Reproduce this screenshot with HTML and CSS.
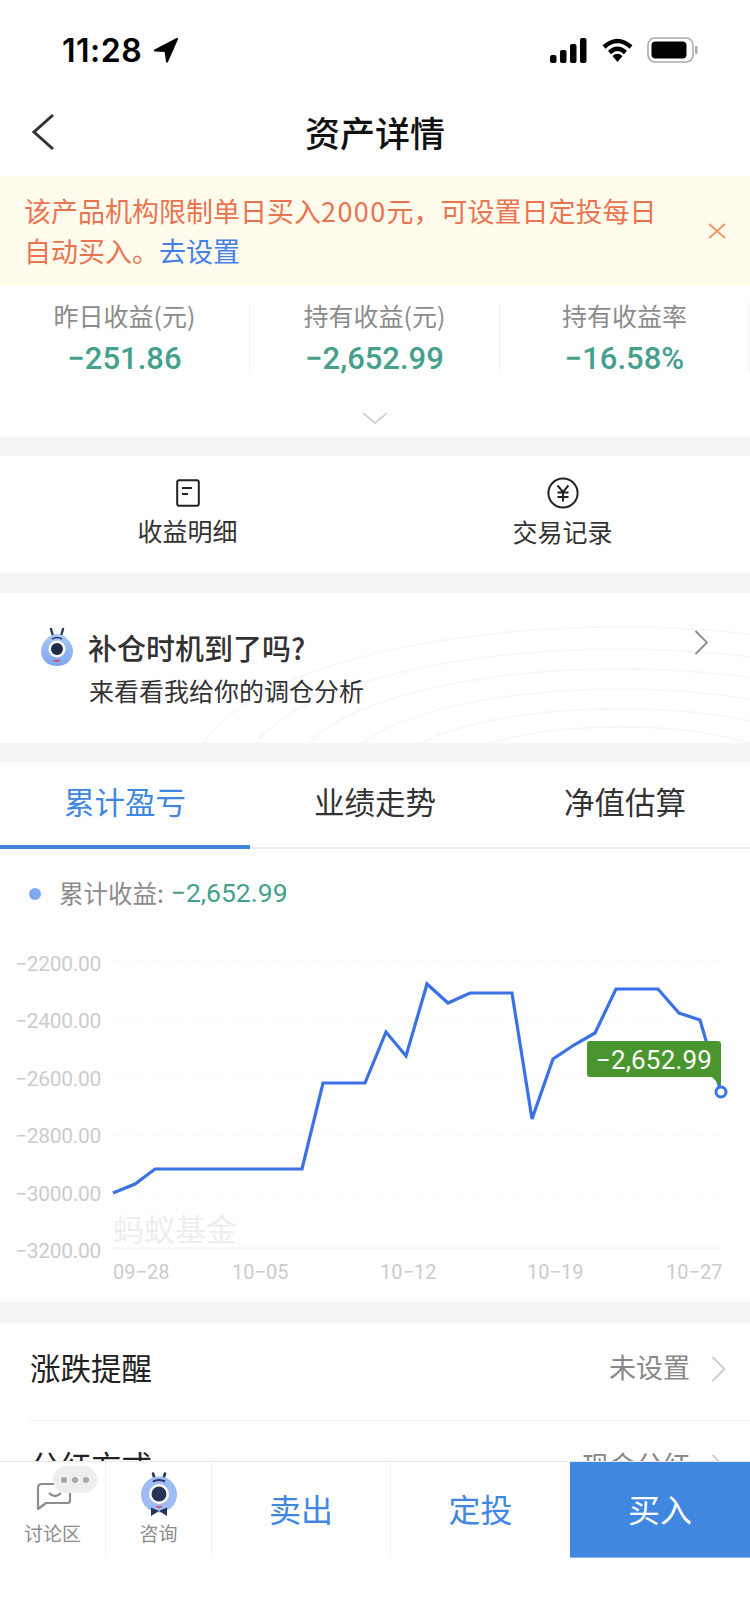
FILE: index.html
```html
<!DOCTYPE html>
<html lang="zh-CN">
<head>
    <meta charset="UTF-8">
    <meta name="viewport" content="width=device-width, initial-scale=1.0">
    <title>资产详情</title>
    <link rel="stylesheet" href="styles.css">
</head>
<body>
    <div class="page">
        <div class="status-bar">
            <div class="status-time">
                <span>11:28</span>
                <svg class="status-arrow" width="26" height="26" viewBox="0 0 26 26"><path d="M24 2 L2 13.5 L12.5 14 L14 24.5 Z" fill="#000" stroke="#000" stroke-width="2" stroke-linejoin="round"/></svg>
            </div>
            <div class="status-icons">
                <svg width="38" height="25" viewBox="0 0 38 25"><rect x="0" y="17" width="6.5" height="8" rx="2"/><rect x="10" y="12" width="6.5" height="13" rx="2"/><rect x="20" y="6" width="6.5" height="19" rx="2"/><rect x="30" y="0" width="6.5" height="25" rx="2"/></svg>
                <svg width="33" height="25" viewBox="0 0 33 25"><path d="M3 9 Q16.5 -3 30 9" fill="none" stroke="#000" stroke-width="4.5"/><path d="M8.5 14.5 Q16.5 7 24.5 14.5" fill="none" stroke="#000" stroke-width="4.5"/><path d="M11.5 18 Q16.5 13.5 21.5 18 L16.5 24 Z"/></svg>
                <svg width="52" height="26" viewBox="0 0 52 26"><rect x="1" y="1" width="45" height="24" rx="7" fill="none" stroke="#aaa" stroke-width="1.6"/><rect x="4.5" y="4.5" width="35" height="17" rx="4"/><rect x="48" y="9" width="2.5" height="8" rx="1.2" fill="#aaa"/></svg>
            </div>
        </div>

        <div class="nav-bar">
            <svg class="nav-back" width="24" height="38" viewBox="0 0 24 38"><path d="M22 2 L3 19 L22 36" fill="none" stroke="#333" stroke-width="3"/></svg>
            <h1 class="nav-title">资产详情</h1>
        </div>

        <div class="notice">
            <div class="notice-text">
                <p>该产品机构限制单日买入<span class="notice-num">2000</span>元，可设置日定投每日</p>
                <p>自动买入。<a class="notice-link">去设置</a></p>
            </div>
            <svg class="notice-close" width="18" height="16" viewBox="0 0 18 16"><path d="M1 1 L17 15 M17 1 L1 15" fill="none" stroke="#ef9462" stroke-width="1.8"/></svg>
        </div>

        <div class="stats">
            <div class="stats-row">
                <div class="stat">
                    <div class="stat-label">昨日收益(元)</div>
                    <div class="stat-value">−251.86</div>
                </div>
                <div class="stat">
                    <div class="stat-label">持有收益(元)</div>
                    <div class="stat-value">−2,652.99</div>
                </div>
                <div class="stat">
                    <div class="stat-label">持有收益率</div>
                    <div class="stat-value">−16.58%</div>
                </div>
            </div>
            <svg class="stats-more" width="26" height="12" viewBox="0 0 26 12"><path d="M1 1 L13 11 L25 1" fill="none" stroke="#c8c8c8" stroke-width="1.6"/></svg>
        </div>

        <div class="actions section">
            <div class="action">
                <svg width="24" height="28" viewBox="0 0 24 28"><rect x="1.2" y="1.2" width="21.6" height="25.6" rx="2" fill="none" stroke="#222" stroke-width="2"/><path d="M6 9 H16 M6 15 H12" stroke="#222" stroke-width="2"/></svg>
                <span>收益明细</span>
            </div>
            <div class="action action-right">
                <svg width="32" height="32" viewBox="0 0 32 32"><circle cx="16" cy="16" r="14.6" fill="none" stroke="#222" stroke-width="2"/><path d="M10.5 8.5 L16 15 L21.5 8.5 M16 15 V24.5 M10.5 15.5 H21.5 M10.5 20 H21.5" fill="none" stroke="#222" stroke-width="2"/></svg>
                <span>交易记录</span>
            </div>
        </div>

        <div class="advisor section">
            <svg class="advisor-arcs" width="750" height="150" viewBox="0 0 750 150">
                <g fill="none" stroke="#f2f7fc" stroke-width="1.5">
                    <ellipse cx="620" cy="180" rx="425" ry="146"/>
                    <ellipse cx="620" cy="180" rx="375" ry="124"/>
                    <ellipse cx="620" cy="180" rx="325" ry="104"/>
                    <ellipse cx="620" cy="180" rx="275" ry="84"/>
                    <ellipse cx="620" cy="180" rx="225" ry="64"/>
                    <ellipse cx="620" cy="180" rx="170" ry="46"/>
                </g>
            </svg>
            <div class="advisor-head">
                <svg class="advisor-mascot" width="34" height="38" viewBox="0 0 34 38">
                    <defs>
                        <linearGradient id="mascotBody" x1="0" y1="0" x2="0" y2="1">
                            <stop offset="0" stop-color="#a9c8f6"/>
                            <stop offset="1" stop-color="#7ea6ee"/>
                        </linearGradient>
                    </defs>
                    <path d="M13 8 L11 1 M21 8 L23 1" stroke="#2c3a5e" stroke-width="2.4" stroke-linecap="round"/>
                    <path d="M17 6 C26 6 33 16 33 23 C33 32 26 38 17 38 C8 38 1 32 1 23 C1 16 8 6 17 6 Z" fill="url(#mascotBody)"/>
                    <path d="M12 11 Q17 8 22 11" fill="none" stroke="#2c3a5e" stroke-width="1.6"/>
                    <circle cx="17" cy="21" r="8.5" fill="#fff"/>
                    <circle cx="17" cy="21" r="6" fill="#1f2a48"/>
                    <path d="M13 32 Q17 36 21 32 Z" fill="#c9495a"/>
                </svg>
                <span class="advisor-title">补仓时机到了吗?</span>
            </div>
            <p class="advisor-sub">来看看我给你的调仓分析</p>
            <svg class="advisor-arrow" width="15" height="25" viewBox="0 0 15 25"><path d="M1.5 1 L13 12.5 L1.5 24" fill="none" stroke="#8a8a8a" stroke-width="1.8"/></svg>
        </div>

        <div class="tabs section">
            <div class="tab tab-active">累计盈亏</div>
            <div class="tab">业绩走势</div>
            <div class="tab">净值估算</div>
        </div>

        <div class="chart-panel">
            <div class="legend">
                <i class="legend-dot"></i>
                <span class="legend-label">累计收益:</span>
                <span class="legend-value">−2,652.99</span>
            </div>
            <svg class="chart" width="750" height="362" viewBox="0 940 750 362">
                <g class="chart-grid">
                    <line x1="112" y1="962" x2="721" y2="962"/>
                    <line x1="112" y1="1019" x2="721" y2="1019"/>
                    <line x1="112" y1="1077" x2="721" y2="1077"/>
                    <line x1="112" y1="1134" x2="721" y2="1134"/>
                    <line x1="112" y1="1192" x2="721" y2="1192"/>
                    <line class="chart-base" x1="112" y1="1248" x2="721" y2="1248"/>
                </g>
                <g class="chart-y">
                    <text x="101" y="971">−2200.00</text>
                    <text x="101" y="1028">−2400.00</text>
                    <text x="101" y="1086">−2600.00</text>
                    <text x="101" y="1143">−2800.00</text>
                    <text x="101" y="1201">−3000.00</text>
                    <text x="101" y="1258">−3200.00</text>
                </g>
                <g class="chart-x">
                    <text x="113" y="1279">09−28</text>
                    <text x="232" y="1279">10−05</text>
                    <text x="380" y="1279">10−12</text>
                    <text x="527" y="1279">10−19</text>
                    <text x="666" y="1279">10−27</text>
                </g>
                <text class="chart-mark" x="113" y="1241">蚂蚁基金</text>
                <polyline class="chart-line" points="113,1193 135,1184 155,1169 302,1169 323,1083 365,1083 386,1032 406,1056 427,984 448,1003 470,993 512,993 532,1119 553,1059 574,1045 595,1033 616,989 658,989 679,1013 700,1020 721,1092"/>
                <circle class="chart-end" cx="721" cy="1092" r="5"/>
                <path class="chart-tip" d="M590 1041 H718 Q721 1041 721 1044 V1086 L712 1077 H590 Q587 1077 587 1074 V1044 Q587 1041 590 1041 Z"/>
                <text class="chart-tip-text" x="654" y="1069">−2,652.99</text>
            </svg>
        </div>

        <div class="list section">
            <div class="list-row">
                <span class="list-name">涨跌提醒</span>
                <span class="list-value">未设置</span>
                <svg width="15" height="26" viewBox="0 0 15 26"><path d="M1.5 1 L13.5 13 L1.5 25" fill="none" stroke="#ccc" stroke-width="1.8"/></svg>
            </div>
            <div class="list-row">
                <span class="list-name">分红方式</span>
                <span class="list-value">现金分红</span>
                <svg width="15" height="26" viewBox="0 0 15 26"><path d="M1.5 1 L13.5 13 L1.5 25" fill="none" stroke="#ccc" stroke-width="1.8"/></svg>
            </div>
        </div>

        <div class="bottom-bar">
            <div class="bar-item bar-talk">
                <svg class="bar-talk-icon" width="60" height="44" viewBox="0 0 60 44">
                    <path d="M26 17 H6 Q2 17 2 21 V42 L10 36 H32 Q34 36 34 33 V26" fill="none" stroke="#8c8c8c" stroke-width="2.2" stroke-linejoin="round"/>
                    <path d="M13 26 Q19 32 25 26" fill="none" stroke="#8c8c8c" stroke-width="2.2"/>
                </svg>
                <div class="bar-bubble"><i></i><i></i><i></i></div>
                <span class="bar-caption">讨论区</span>
            </div>
            <div class="bar-item">
                <svg width="38" height="44" viewBox="0 0 38 44">
                    <path d="M15 8 L13 1.5 M23 8 L25 1.5" stroke="#27345a" stroke-width="2.6" stroke-linecap="round"/>
                    <circle cx="19" cy="22.5" r="18" fill="#9dbcf4"/>
                    <path d="M13 9.5 Q19 6.5 25 9.5" fill="none" stroke="#27345a" stroke-width="2"/>
                    <circle cx="19" cy="22" r="10" fill="#fff"/>
                    <circle cx="19" cy="22" r="7.5" fill="#27345a"/>
                    <path d="M15 34 Q19 38 23 34 Z" fill="#d4566a"/>
                    <path d="M19 39 L11 35.5 V44 Z M19 39 L27 35.5 V44 Z" fill="#27345a"/>
                </svg>
                <span class="bar-caption">咨询</span>
            </div>
            <div class="bar-btn bar-btn-line">卖出</div>
            <div class="bar-btn">定投</div>
            <div class="bar-btn bar-btn-buy">买入</div>
        </div>
    </div>
</body>
</html>
```

FILE: styles.css
```css
* {
    box-sizing: border-box;
}
body {
    margin: 0;
    padding: 0;
    background-color: #ffffff;
    font-family: "Noto Sans CJK SC", "Liberation Sans", sans-serif;
    color: #333333;
}
svg {
    display: block;
}
p, h1 {
    margin: 0;
}
.page {
    position: relative;
    width: 750px;
    height: 1623px;
    overflow: hidden;
    background-color: #ffffff;
}
.section {
    border-top: 20px solid #f5f5f5;
}

/* status bar */
.status-bar {
    height: 88px;
    padding: 37px 50px 0 62px;
    display: flex;
    justify-content: space-between;
    align-items: flex-start;
}
.status-time {
    display: flex;
    align-items: center;
    gap: 11px;
    height: 26px;
    font-family: Inter, sans-serif;
    font-size: 32px;
    font-weight: 600;
    letter-spacing: 0.5px;
    color: #000000;
}
.status-icons {
    display: flex;
    align-items: center;
    gap: 13px;
    margin-right: 1px;
}

/* nav */
.nav-bar {
    height: 88px;
    position: relative;
    display: flex;
    align-items: center;
    justify-content: center;
}
.nav-back {
    position: absolute;
    left: 31px;
    top: 25px;
}
.nav-title {
    font-size: 35px;
    font-weight: 500;
    color: #111111;
    line-height: 88px;
}

/* notice */
.notice {
    height: 110px;
    padding: 15px 24px 0 24px;
    display: flex;
    justify-content: space-between;
    background-color: #fffbed;
}
.notice-text {
    width: 640px;
    font-size: 27px;
    line-height: 40px;
    color: #ea7350;
}
.notice-num {
    letter-spacing: 1.4px;
}
.notice-link {
    color: #4480e8;
}
.notice-close {
    margin-top: 32px;
}

/* stats */
.stats {
    height: 151px;
    padding-top: 17px;
}
.stats-row {
    display: grid;
    grid-template-columns: repeat(3, 250px);
}
.stat {
    height: 70px;
    border-right: 1px solid #f0f0f0;
    text-align: center;
}
.stat-label {
    margin-top: -3px;
    font-size: 25px;
    line-height: 30px;
    color: #8c8c8c;
}
.stat-value {
    margin-top: 11px;
    font-family: Roboto, sans-serif;
    font-size: 31px;
    font-weight: 500;
    line-height: 36px;
    color: #45a08d;
}
.stats-more {
    margin: 39px auto 0;
}

/* actions */
.actions {
    height: 136px;
    border-top-width: 19px;
    display: flex;
}
.action {
    width: 50%;
    padding-top: 21px;
    display: flex;
    flex-direction: column;
    align-items: center;
    font-size: 25px;
    color: #333333;
}
.action svg {
    height: 32px;
}
.action span {
    margin-top: 3px;
    line-height: 36px;
}
.action-right span {
    margin-top: 4px;
}

/* advisor */
.advisor {
    height: 170px;
    position: relative;
    padding: 34px 40px 0;
}
.advisor-arcs {
    position: absolute;
    left: 0;
    top: 0;
}
.advisor-head {
    position: relative;
    display: flex;
    align-items: center;
    gap: 14px;
}
.advisor-title {
    font-size: 29px;
    font-weight: 500;
    line-height: 40px;
}
.advisor-sub {
    position: relative;
    margin: 3px 0 0 49px;
    font-size: 25px;
    line-height: 40px;
}
.advisor-arrow {
    position: absolute;
    right: 41px;
    top: 37px;
}

/* tabs */
.tabs {
    height: 106px;
    border-top-width: 19px;
    display: flex;
    border-bottom: 2px solid #eeeeee;
}
.tab {
    width: 250px;
    height: 87px;
    padding-top: 18px;
    text-align: center;
    font-size: 30.5px;
    line-height: 42px;
}
.tab-active {
    color: #3f87e0;
    border-bottom: 4px solid #3f87e0;
}

/* chart */
.chart-panel {
    height: 453px;
}
.legend {
    height: 91px;
    padding: 28px 0 0 29px;
    display: flex;
    align-items: flex-start;
    font-size: 24.5px;
    line-height: 32px;
}
.legend-dot {
    width: 12px;
    height: 12px;
    margin-top: 11px;
    border-radius: 50%;
    background-color: #7ea8f0;
}
.legend-label {
    margin-left: 18px;
    color: #8c8c8c;
}
.legend-value {
    margin-left: 7px;
    font-family: Roboto, sans-serif;
    font-size: 26.5px;
    color: #45a08d;
}
.chart-grid line {
    stroke: #f2f2f2;
    stroke-width: 1;
    stroke-dasharray: 2 3;
}
.chart-grid .chart-base {
    stroke-dasharray: none;
}
.chart-y text {
    font-family: Roboto, sans-serif;
    font-size: 21px;
    letter-spacing: -0.3px;
    fill: #cccccc;
    text-anchor: end;
}
.chart-x text {
    font-family: Roboto, sans-serif;
    font-size: 20px;
    fill: #cccccc;
}
.chart-mark {
    font-size: 31px;
    fill: #eeeeee;
}
.chart-line {
    fill: none;
    stroke: #3a72e6;
    stroke-width: 3.2;
    stroke-linejoin: miter;
}
.chart-end {
    fill: #ffffff;
    stroke: #3a72e6;
    stroke-width: 3;
}
.chart-tip {
    fill: #4a962e;
}
.chart-tip-text {
    font-family: Roboto, sans-serif;
    font-size: 26px;
    letter-spacing: 0.2px;
    fill: #ffffff;
    text-anchor: middle;
}

/* list */
.list {
    border-top-width: 21px;
    padding-left: 30px;
}
.list-row {
    height: 98px;
    padding: 0 24px 10px 0;
    display: flex;
    align-items: center;
    border-bottom: 1px solid #eeeeee;
}
.list-name {
    flex: 1;
    font-size: 30.5px;
    color: #222222;
}
.list-value {
    margin-right: 21px;
    font-size: 27px;
    color: #888888;
}
.list-row svg {
    margin-top: 4px;
}

/* bottom bar */
.bottom-bar {
    position: absolute;
    left: 0;
    right: 0;
    bottom: 0;
    height: 162px;
    display: flex;
    align-items: flex-start;
    background-color: #ffffff;
    border-top: 1px solid #e8e8e8;
}
.bar-item {
    position: relative;
    width: 106px;
    height: 95px;
    padding-top: 10px;
    display: flex;
    flex-direction: column;
    align-items: center;
    border-right: 1px solid #f0f0f0;
}
.bar-item .bar-caption {
    margin-top: 3px;
}
.bar-talk {
    padding-top: 54px;
}
.bar-talk-icon {
    position: absolute;
    left: 36px;
    top: 5px;
}
.bar-bubble {
    position: absolute;
    left: 53px;
    top: 4px;
    width: 44px;
    height: 27px;
    border-radius: 14px;
    background-color: #eeeeee;
    display: flex;
    align-items: center;
    justify-content: center;
    gap: 5px;
}
.bar-bubble i {
    width: 6px;
    height: 6px;
    border-radius: 50%;
    background-color: #a8a8a8;
}
.bar-caption {
    font-size: 19px;
    line-height: 28px;
    color: #8c8c8c;
}
.bar-btn {
    width: 179px;
    height: 95px;
    line-height: 92px;
    text-align: center;
    font-size: 32px;
    color: #3f87e0;
}
.bar-btn-line {
    border-right: 1px solid #f0f0f0;
}
.bar-btn-buy {
    width: 180px;
    height: 96px;
    background-color: #3f87e0;
    border-bottom: 1px solid #8fbcf0;
    color: #ffffff;
}
```
